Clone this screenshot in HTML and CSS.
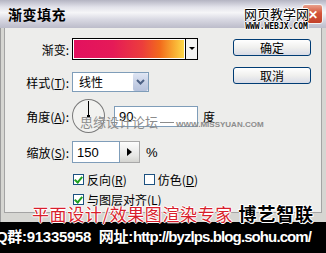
FILE: index.html
```html
<!DOCTYPE html>
<html lang="zh-CN">
<head>
    <meta charset="UTF-8">
    <title>渐变填充</title>
    <link rel="stylesheet" href="styles.css">
</head>
<body>
    <div class="window">
        <div class="titlebar">
            <span class="title">渐变填充</span>
            <span class="close">✕</span>
        </div>

        <div class="frame">
            <div class="panel">
                <!-- left: settings -->
                <div class="form">
                    <div class="row row-grad">
                        <span class="label">渐变:</span>
                        <div class="gradient">
                            <div class="grad-fill"></div>
                            <div class="grad-btn"></div>
                        </div>
                    </div>
                    <div class="row row-style">
                        <span class="label">样式(<u>T</u>):</span>
                        <div class="select">
                            <span class="select-text">线性</span>
                            <span class="select-btn">
                                <svg width="9" height="6" viewBox="0 0 9 6"><path d="M1 1 L4.5 4.5 L8 1" fill="none" stroke="#4d6185" stroke-width="2"/></svg>
                            </span>
                        </div>
                    </div>
                    <div class="row row-angle">
                        <span class="label">角度(<u>A</u>):</span>
                        <div class="dial"><span class="dial-hand"></span><span class="dial-dot"></span></div>
                        <input class="field field-angle" type="text" value="90">
                        <span class="unit">度</span>
                    </div>
                    <div class="row row-scale">
                        <span class="label">缩放(<u>S</u>):</span>
                        <input class="field field-scale" type="text" value="150">
                        <span class="step-btn">
                            <svg width="5" height="8" viewBox="0 0 5 8"><path d="M0 0 L5 4 L0 8 Z" fill="#000"/></svg>
                        </span>
                        <span class="unit unit-pct">%</span>
                    </div>
                    <div class="row row-check">
                        <span class="label"></span>
                        <span class="check checked"></span>
                        <span class="check-text">反向(<u>R</u>)</span>
                        <span class="check check-second"></span>
                        <span class="check-text">仿色(<u>D</u>)</span>
                    </div>
                    <div class="row row-check row-last">
                        <span class="label"></span>
                        <span class="check checked"></span>
                        <span class="check-text">与图层对齐(<u>L</u>)</span>
                    </div>
                </div>

                <!-- right: buttons -->
                <div class="buttons">
                    <button class="btn">确定</button>
                    <button class="btn">取消</button>
                </div>
            </div>
        </div>

        <div class="footer">Q群:91335958&nbsp;&nbsp;网址:<span class="footer-url">http://byzlps.blog.sohu.com/</span></div>

        <!-- watermarks over the screenshot -->
        <div class="wm-site">
            <div class="wm-site-name">网页教学网</div>
            <div class="wm-site-url">WWW.WEBJX.COM</div>
        </div>
        <div class="wm-forum">思缘设计论坛<span class="wm-dash"></span><span class="wm-forum-url">WWW.MISSYUAN.COM</span></div>
        <div class="wm-banner">
            <span class="wm-red">平面设计/效果图渲染专家</span>
            <span class="wm-black">博艺智联</span>
        </div>
    </div>
</body>
</html>
```

FILE: styles.css
```css
body {
    margin: 0;
    background: #000;
    font-family: "Noto Sans CJK SC", "Liberation Sans", sans-serif;
    font-size: 12px;
    color: #000;
}

.window {
    position: relative;
    width: 326px;
    height: 253px;
    overflow: hidden;
    background: #d6d6d2;
}

/* title bar */
.titlebar {
    height: 28px;
    display: flex;
    align-items: center;
    padding-left: 8px;
    box-sizing: border-box;
    background: linear-gradient(#b4b4c2 0, #e2e2ea 25%, #f6f6f8 45%, #d8d8e2 70%, #bcbcca 100%);
}

.title {
    font-size: 14px;
    font-weight: bold;
    letter-spacing: 0.5px;
}

.close {
    margin-left: auto;
    margin-right: 3px;
    width: 21px;
    height: 20px;
    border: 1px solid #f4f4f4;
    border-radius: 3px;
    box-sizing: border-box;
    background: linear-gradient(#e9a08c, #d4553a 45%, #c2402a);
    color: #fff;
    font-size: 12px;
    font-weight: bold;
    line-height: 18px;
    text-align: center;
}

/* dialog body */
.frame {
    height: 194px;
    padding: 0 4px 0 3px;
    border-left: 1px solid #9c9c9c;
    box-sizing: border-box;
}

.panel {
    height: 185px;
    display: flex;
    border: 1px solid #a4a4a4;
    border-top: none;
    box-sizing: border-box;
    background: #ededeb;
}

.form {
    flex: 1;
    padding-top: 10px;
}

.row {
    display: flex;
    align-items: center;
}

.label {
    width: 64px;
    margin-right: 3px;
    text-align: right;
    white-space: nowrap;
}

.row-grad {
    height: 22px;
}

.gradient {
    display: flex;
    width: 126px;
    height: 22px;
    border: 1px solid #000;
    box-sizing: border-box;
    background: #fff;
}

.grad-fill {
    flex: 1;
    margin: 1px;
    background: linear-gradient(90deg, #e3115f 0, #e51a58 35%, #ec3d3c 62%, #f26a1c 78%, #f8a830 90%, #fdd848 100%);
}

.grad-btn {
    width: 11px;
    border-left: 1px solid #000;
    background: #f4f4f2;
    position: relative;
}

.grad-btn::after {
    content: "";
    position: absolute;
    left: 3px;
    top: 8px;
    border-left: 3px solid transparent;
    border-right: 3px solid transparent;
    border-top: 3px solid #000;
}

.row-style {
    margin-top: 12px;
    height: 20px;
}

.select {
    display: flex;
    width: 77px;
    height: 20px;
    border: 1px solid #7f9db9;
    box-sizing: border-box;
    background: #fff;
}

.select-text {
    flex: 1;
    padding-left: 6px;
    line-height: 18px;
}

.select-btn {
    width: 15px;
    display: flex;
    align-items: center;
    justify-content: center;
    border-radius: 2px;
    background: linear-gradient(#dfe6f4, #c4cee4 60%, #b6c2dc);
}

.row-angle {
    margin-top: 6px;
    height: 36px;
}

.dial {
    position: relative;
    width: 33px;
    height: 34px;
    border: 1px solid #7a7a7a;
    border-radius: 50%;
    box-sizing: border-box;
    background: #f2f2f0;
}

.dial-hand {
    position: absolute;
    left: 15px;
    top: 1px;
    width: 1px;
    height: 16px;
    background: #000;
}

.dial-dot {
    position: absolute;
    left: 14px;
    top: 15px;
    width: 3px;
    height: 3px;
    background: #000;
}

.field {
    height: 21px;
    margin: 0;
    padding: 0 0 0 4px;
    border: 1px solid #7f9db9;
    box-sizing: border-box;
    font-family: "Liberation Sans", sans-serif;
    font-size: 13px;
    background: #fff;
}

.field-angle {
    width: 84px;
    margin-left: 9px;
}

.unit {
    margin-left: 5px;
}

.row-scale {
    margin-top: 7px;
    height: 22px;
}

.field-scale {
    width: 48px;
    height: 22px;
}

.step-btn {
    width: 20px;
    height: 22px;
    display: flex;
    align-items: center;
    justify-content: center;
    border: 1px solid #a8a8a8;
    border-left: none;
    box-sizing: border-box;
    background: linear-gradient(#fcfcfc, #e6e6e4 70%, #d4d4d0);
}

.unit-pct {
    margin-left: 6px;
    font-family: "Liberation Sans", sans-serif;
    font-size: 13px;
}

.row-check {
    margin-top: 9px;
    height: 14px;
}

.row-last {
    margin-top: 6px;
}

.check {
    width: 11px;
    height: 11px;
    margin-left: 1px;
    border: 1px solid #1c5180;
    box-sizing: border-box;
    background: #fff;
    position: relative;
}

.check.checked::after {
    content: "";
    position: absolute;
    left: 2px;
    top: 0;
    width: 3px;
    height: 6px;
    border: solid #21a121;
    border-width: 0 2px 2px 0;
    transform: rotate(40deg);
}

.check-second {
    margin-left: 17px;
}

.check-text {
    margin-left: 3px;
}

/* buttons */
.buttons {
    width: 78px;
    margin-right: 10px;
    padding-top: 11px;
    display: flex;
    flex-direction: column;
    gap: 11px;
}

.btn {
    height: 17px;
    padding: 0;
    border: 1px solid #003c74;
    border-radius: 3px;
    background: linear-gradient(#ffffff, #f0f0ee 50%, #d8dbe6);
    font-family: "Noto Sans CJK SC", sans-serif;
    font-size: 12px;
    line-height: 14px;
}

/* footer strip */
.footer {
    height: 31px;
    background: #000;
    color: #fff;
    font-family: "Liberation Sans", "Noto Sans CJK SC", sans-serif;
    font-size: 15px;
    font-weight: bold;
    line-height: 29px;
    white-space: nowrap;
    text-indent: -4px;
    letter-spacing: -0.3px;
}

.footer-url {
    letter-spacing: -0.9px;
}

/* watermarks */
.wm-site {
    position: absolute;
    left: 244px;
    top: 6px;
    text-align: center;
    color: #000;
    text-shadow: 1px 0 #fff, -1px 0 #fff, 0 1px #fff, 0 -1px #fff;
}

.wm-site-name {
    font-size: 13px;
    line-height: 16px;
}

.wm-site-url {
    font-family: "DejaVu Sans Mono", monospace;
    font-size: 8px;
    font-weight: bold;
    line-height: 9px;
}

.wm-forum {
    position: absolute;
    left: 80px;
    top: 113px;
    color: #8c8c8c;
    font-size: 13px;
    line-height: 17px;
    white-space: nowrap;
}

.wm-dash {
    display: inline-block;
    width: 14px;
    height: 1px;
    margin: 0 2px 4px;
    background: #8c8c8c;
}

.wm-forum-url {
    font-family: "Liberation Sans", sans-serif;
    font-size: 8px;
    font-weight: bold;
}

.wm-banner {
    position: absolute;
    left: 32px;
    top: 203px;
    white-space: nowrap;
    line-height: 21px;
}

.wm-red {
    color: #d81e2c;
    font-size: 17px;
    letter-spacing: 0.6px;
    text-shadow: 1px 0 #fff, -1px 0 #fff, 0 1px #fff, 0 -1px #fff;
}

.wm-black {
    margin-left: 3px;
    color: #000;
    font-size: 18px;
    font-weight: bold;
    letter-spacing: 0.8px;
    text-shadow: 1px 0 #fff, -1px 0 #fff, 0 1px #fff, 0 -1px #fff, 1px 1px #fff, -1px -1px #fff;
}
```
